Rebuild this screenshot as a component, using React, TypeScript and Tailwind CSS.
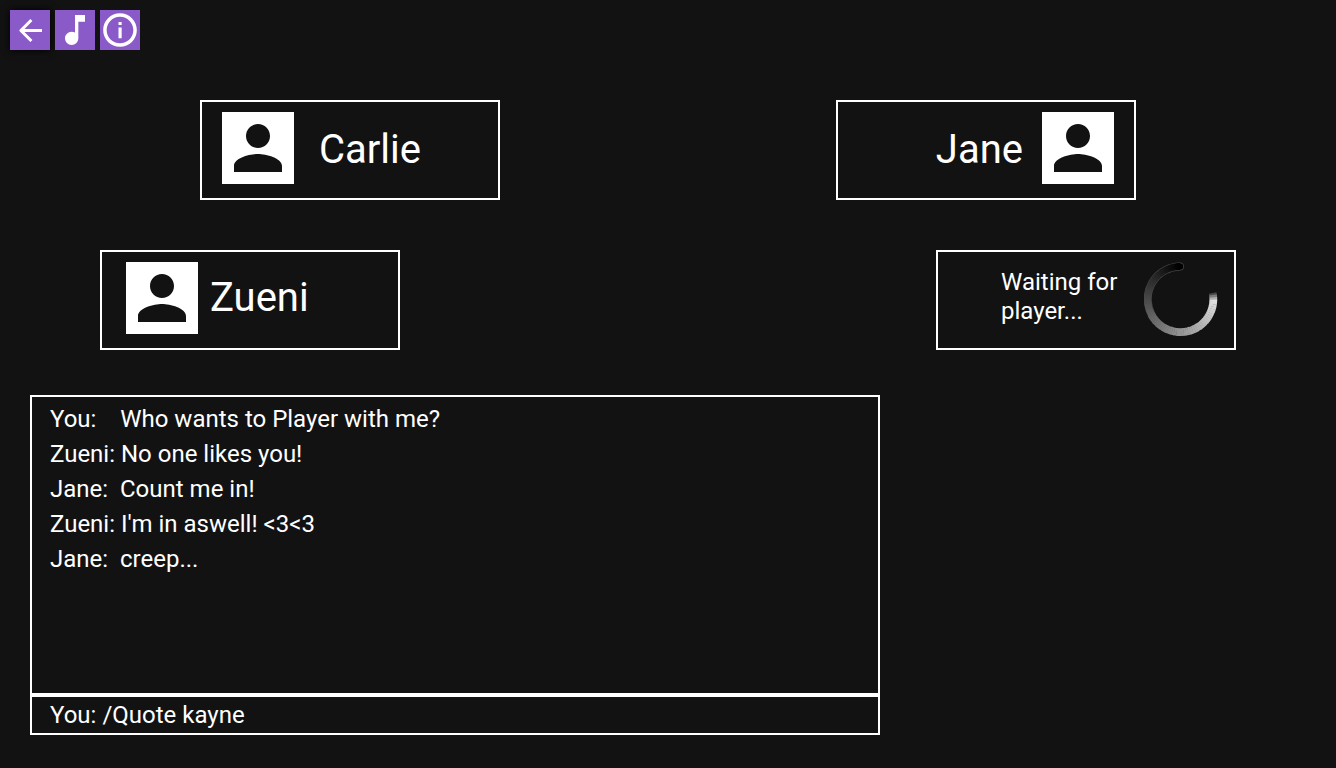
import { useState } from "react";

const PERSON =
  "M12 12c2.21 0 4-1.79 4-4s-1.79-4-4-4-4 1.79-4 4 1.79 4 4 4zm0 2c-2.67 0-8 1.34-8 4v2h16v-2c0-2.66-5.33-4-8-4z";

const messages = [
  "You:    Who wants to Player with me?",
  "Zueni: No one likes you!",
  "Jane:  Count me in!",
  "Zueni: I'm in aswell! <3<3",
  "Jane:  creep...",
];

function Avatar() {
  return (
    <svg viewBox="0 0 24 24" className="size-[72px] shrink-0 bg-white fill-[#121212]" aria-hidden="true">
      <path d={PERSON} />
    </svg>
  );
}

const RADIUS = 32.8;

function point(deg: number) {
  const a = (deg * Math.PI) / 180;
  return `${(36.5 - RADIUS * Math.sin(a)).toFixed(2)} ${(37.3 - RADIUS * Math.cos(a)).toFixed(2)}`;
}

function arc(from: number, to: number) {
  return `M${point(from)} A${RADIUS} ${RADIUS} 0 0 0 ${point(to)}`;
}

function Spinner() {
  const start = 1;
  const end = 281;
  const steps = 70;
  const size = (end - start) / steps;
  return (
    <svg viewBox="0 0 74 74" className="size-[74px] shrink-0" role="img" aria-label="Loading">
      <path d={arc(start, 120)} fill="none" stroke="#484848" strokeWidth="8" strokeLinecap="round" />
      <path d={arc(start, start + 4)} fill="none" stroke="#000" strokeWidth="6.6" strokeLinecap="round" />
      {Array.from({ length: steps }, (_, i) => {
        const from = start + i * size;
        const to = Math.min(from + size + 0.6, end);
        const shade = Math.round((i / (steps - 1)) * 232);
        const opacity = Math.min(1, (steps - i) / 4);
        return (
          <path
            key={i}
            d={arc(from, to)}
            fill="none"
            stroke={`rgb(${shade},${shade},${shade})`}
            strokeOpacity={opacity}
            strokeWidth={i > 28 ? 7.8 : 6.8}
          />
        );
      })}
    </svg>
  );
}

const toolButton = "flex size-10 items-center justify-center bg-[#8a5ac8] text-white";

export default function App() {
  const [draft, setDraft] = useState("/Quote kayne");
  return (
    <div className="min-h-screen bg-[#121212] font-['Roboto',sans-serif] text-2xl text-white">
      <header className="flex gap-[5px] p-2.5">
        <button type="button" aria-label="Back" className={`${toolButton} shadow-[0_0_8px_#000]`}>
          <svg viewBox="0 0 40 40" className="size-10" fill="none" stroke="currentColor" strokeWidth="3">
            <path d="M32 20.5H11M21.4 10L10.9 20.5L21.4 31" strokeLinejoin="round" />
          </svg>
        </button>
        <button type="button" aria-label="Music" className={toolButton}>
          <svg viewBox="0 0 24 24" className="size-10 fill-current">
            <path d="M12 3v10.55c-.59-.34-1.27-.55-2-.55-2.21 0-4 1.79-4 4s1.79 4 4 4 4-1.79 4-4V7h4V3h-6z" />
          </svg>
        </button>
        <button type="button" aria-label="Info" className={toolButton}>
          <svg viewBox="0 0 24 24" className="size-10 fill-current">
            <path d="M11.1 7.2h1.9v1.8h-1.9zm0 3.3h1.9v6.5h-1.9zM12 1.9C6.42 1.9 1.9 6.42 1.9 12s4.52 10.1 10.1 10.1 10.1-4.52 10.1-10.1S17.58 1.9 12 1.9zm0 18.1c-4.41 0-8-3.59-8-8s3.59-8 8-8 8 3.59 8 8-3.59 8-8 8z" />
          </svg>
        </button>
      </header>

      <main>
        <section aria-label="Players" className="flex flex-col gap-[50px] pt-10">
          <div className="flex justify-between gap-6 px-[200px]">
            <div className="flex h-[100px] w-[300px] items-start gap-[25px] border-2 border-white px-5 py-2.5">
              <Avatar />
              <span className="text-[40px] leading-[76px]">Carlie</span>
            </div>
            <div className="flex h-[100px] w-[300px] items-start justify-end gap-[19px] border-2 border-white px-5 py-2.5">
              <span className="text-[40px] leading-[76px]">Jane</span>
              <Avatar />
            </div>
          </div>
          <div className="flex justify-between gap-6 px-[100px]">
            <div className="flex h-[100px] w-[300px] items-start gap-3 border-2 border-white px-6 py-2.5">
              <Avatar />
              <span className="text-[40px] leading-[72px]">Zueni</span>
            </div>
            <div className="flex h-[100px] w-[300px] items-start justify-end gap-[25px] border-2 border-white px-4 py-2.5">
              <p className="w-[118px] pt-1.5 leading-[29px]">Waiting for player...</p>
              <Spinner />
            </div>
          </div>
        </section>

        <section aria-label="Chat" className="px-[30px] pt-[45px] pb-8">
          <ul className="min-h-[300px] w-full max-w-[850px] border-2 border-white px-[18px] py-[5px] leading-[35px]">
            {messages.map((m) => (
              <li key={m} className="whitespace-pre-wrap">
                {m}
              </li>
            ))}
          </ul>
          <form
            className="flex h-10 w-full max-w-[850px] items-center gap-1.5 border-2 border-white px-[18px]"
            onSubmit={(e) => e.preventDefault()}
          >
            <label htmlFor="draft">You:</label>
            <input
              id="draft"
              type="text"
              autoComplete="off"
              value={draft}
              onChange={(e) => setDraft(e.target.value)}
              className="min-w-0 flex-1 bg-transparent outline-none"
            />
          </form>
        </section>
      </main>
    </div>
  );
}
